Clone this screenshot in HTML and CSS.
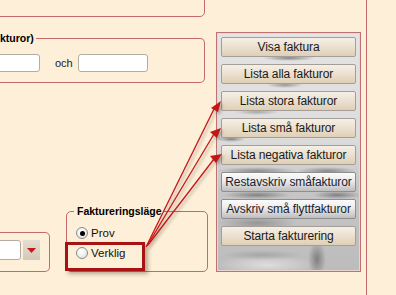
FILE: index.html
```html
<!DOCTYPE html>
<html lang="sv">
<head>
<meta charset="utf-8">
<title>Fakturering</title>
<link rel="stylesheet" href="styles.css">
</head>
<body>
<div class="page">
  <div class="main">
    <div class="form">
      <div class="topbox"></div>
      <div class="group limits">
        <div class="group-title">kturor)</div>
        <div class="row">
          <span class="input w1"></span>
          <span class="och">och</span>
          <span class="input w2"></span>
        </div>
      </div>
      <div class="bottom-row">
        <div class="group combo-group">
          <span class="input w3"></span>
          <span class="dd"><svg width="9" height="5" viewBox="0 0 9 5"><polygon points="0,0 9,0 4.5,5" fill="#d01414"/></svg></span>
        </div>
        <div class="group mode">
          <div class="group-title">Faktureringsläge</div>
          <div class="radio first"><span class="dot checked"></span>Prov</div>
          <div class="radio second"><span class="dot"></span>Verklig</div>
          <div class="highlight"></div>
        </div>
      </div>
    </div>
    <div class="panel">
      <div class="btn beige">Visa faktura</div>
      <div class="btn beige">Lista alla fakturor</div>
      <div class="btn beige">Lista stora fakturor</div>
      <div class="btn beige">Lista små fakturor</div>
      <div class="btn beige">Lista negativa fakturor</div>
      <div class="btn silver">Restavskriv småfakturor</div>
      <div class="btn silver">Avskriv små flyttfakturor</div>
      <div class="btn beige">Starta fakturering</div>
    </div>
  </div>
  <div class="side"></div>
  <svg class="arrows" width="396" height="295" viewBox="0 0 396 295">
    <g stroke="#c41616" stroke-width="1.3" fill="none">
      <line x1="146" y1="247" x2="214" y2="109"/>
      <line x1="147" y1="246" x2="214" y2="134"/>
      <line x1="148" y1="245" x2="214" y2="159"/>
    </g>
    <g fill="#c41616">
      <polygon points="221,101 218,112 211,108"/>
      <polygon points="221,128 217,138 210,132"/>
      <polygon points="222,154 216,163 210,156"/>
    </g>
  </svg>
</div>
</body>
</html>
```
FILE: styles.css
```css
* { box-sizing: border-box; }
html, body { margin: 0; padding: 0; }
body {
  font-family: "Liberation Sans", Arial, sans-serif;
  font-size: 11px;
  color: #111;
  background: #fdefd8;
  overflow: hidden;
}
.page {
  position: relative;
  display: flex;
  width: 396px;
  height: 295px;
  background: #fdefd8;
  overflow: hidden;
}
.main {
  display: flex;
  width: 367px;
  height: 295px;
  border-right: 1px solid #c46a6a;
}
.form {
  width: 216px;
  display: flex;
  flex-direction: column;
}
.topbox {
  margin: -10px 0 0 -10px;
  width: 215px;
  height: 27px;
  border: 1px solid #c46a6a;
  border-radius: 0 0 5px 0;
}
.group {
  border: 1px solid #c46a6a;
  border-radius: 5px;
}
.group-title {
  font-weight: bold;
  font-size: 10.5px;
  line-height: 13px;
  height: 13px;
  margin-top: -7px;
  background: #fdefd8;
  align-self: flex-start;
  width: max-content;
  color: #000;
}
.limits {
  margin: 21px 0 0 -10px;
  width: 215px;
  height: 45px;
  border-radius: 0 5px 5px 0;
  border-left: none;
}
.limits .group-title {
  margin-left: 10px;
  padding-right: 2px;
}
.row {
  display: flex;
  align-items: center;
  margin-top: 9px;
}
.input {
  display: block;
  height: 18px;
  background: #fff;
  border: 1px solid #b3aca4;
  border-radius: 3px;
}
.w1 { width: 51px; margin-left: -1px; }
.och { margin-left: 15px; width: 23px; color: #222; }
.w2 { width: 70px; }
.bottom-row {
  display: flex;
  align-items: flex-end;
  margin-top: 128px;
  height: 61px;
}
.combo-group {
  display: flex;
  align-items: flex-start;
  margin-left: -10px;
  width: 60px;
  height: 40px;
  padding-top: 7px;
  border-left: none;
  border-radius: 0 5px 5px 0;
}
.w3 { width: 31px; height: 20px; }
.dd {
  display: flex;
  align-items: center;
  justify-content: center;
  margin-left: 2px;
  width: 17px;
  height: 20px;
  background: linear-gradient(#e4ded2, #d2c9b8);
}
.mode {
  position: relative;
  display: flex;
  flex-direction: column;
  margin-left: 16px;
  width: 142px;
  height: 61px;
}
.mode .group-title {
  margin-left: 7px;
  padding: 0 2px 0 3px;
}
.radio {
  display: flex;
  align-items: center;
  height: 14px;
  margin-left: 9px;
  font-size: 11.5px;
  color: #111;
}
.radio.first { margin-top: 8px; }
.radio.second { margin-top: 6px; }
.dot {
  position: relative;
  width: 12px;
  height: 12px;
  margin-right: 3px;
  border-radius: 50%;
  border: 1px solid #8a8a8a;
  background: radial-gradient(circle at 40% 35%, #ffffff 0%, #f0f0f0 50%, #d6d6d6 100%);
}
.dot.checked::after {
  content: "";
  position: absolute;
  left: 2.5px;
  top: 2.5px;
  width: 5px;
  height: 5px;
  border-radius: 50%;
  background: #000;
}
.highlight {
  position: absolute;
  left: -2px;
  top: 30px;
  width: 80px;
  height: 29px;
  border: 3px solid #a81212;
  box-shadow: 3px 3px 4px rgba(60, 40, 20, 0.35);
}
.panel {
  margin-top: 32px;
  width: 145px;
  height: 240px;
  padding: 4px;
  display: flex;
  flex-direction: column;
  gap: 7px;
  border: 1px solid #c07272;
  box-shadow: inset 0 0 0 1px #e9d4d0;
  background:
    radial-gradient(ellipse 26px 3px at 72px 25px, rgba(110,110,110,.8), rgba(110,110,110,0)),
    radial-gradient(ellipse 18px 3px at 68px 52px, rgba(120,120,120,.7), rgba(120,120,120,0)),
    radial-gradient(ellipse 22px 3px at 40px 79px, rgba(130,130,130,.6), rgba(130,130,130,0)),
    radial-gradient(ellipse 14px 3px at 14px 106px, rgba(90,90,90,.7), rgba(90,90,90,0)),
    radial-gradient(ellipse 40px 4px at 40px 138px, rgba(110,110,110,.7), rgba(110,110,110,0)),
    radial-gradient(ellipse 30px 4px at 110px 138px, rgba(90,90,90,.6), rgba(90,90,90,0)),
    radial-gradient(ellipse 34px 4px at 40px 162px, rgba(100,100,100,.7), rgba(100,100,100,0)),
    radial-gradient(ellipse 24px 4px at 120px 162px, rgba(80,80,80,.6), rgba(80,80,80,0)),
    radial-gradient(ellipse 40px 8px at 40px 190px, rgba(120,120,120,.6), rgba(120,120,120,0)),
    radial-gradient(ellipse 9px 18px at 100px 226px, rgba(100,100,100,.7), rgba(100,100,100,0)),
    radial-gradient(ellipse 40px 5px at 45px 222px, rgba(150,150,150,.6), rgba(150,150,150,0)),
    radial-gradient(ellipse 50px 10px at 50px 232px, rgba(235,235,235,.7), rgba(235,235,235,0)),
    linear-gradient(180deg, #e4e4e4 0%, #dcdcdc 45%, #c6c6c6 65%, #bcbcbc 100%);
}
.btn {
  height: 20px;
  flex: none;
  display: flex;
  align-items: center;
  justify-content: center;
  font-size: 12px;
  line-height: 18px;
  border: 1px solid #a49e96;
  border-radius: 2px;
  white-space: nowrap;
  letter-spacing: -0.1px;
}
.beige {
  color: #1a1a1a;
  background: linear-gradient(180deg, #f5efe6 0%, #ece2d2 45%, #dfcfb6 100%);
}
.silver {
  color: #1c1c2c;
  border-color: #8e8e8e;
  background: linear-gradient(180deg, #fbfbfb 0%, #ebebeb 45%, #d2d2d2 75%, #bdbdbd 100%);
}
.side { flex: 1; }
.arrows {
  position: absolute;
  left: 0;
  top: 0;
  filter: drop-shadow(2px 2px 1.5px rgba(60, 40, 30, 0.35));
  pointer-events: none;
}
```
